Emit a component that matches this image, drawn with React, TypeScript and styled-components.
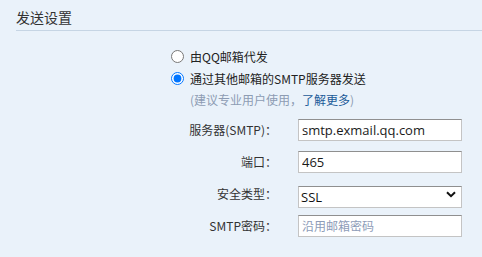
import React from "react";
import styled, { createGlobalStyle } from "styled-components";

const GlobalStyle = createGlobalStyle`
  html, body {
    margin: 0;
    padding: 0;
    background: #eaf2fa;
  }
  body {
    font-family: "Noto Sans CJK SC", "Noto Sans", sans-serif;
    color: #333;
  }
`;

const Page = styled.div`
  width: 482px;
  height: 257px;
  background: #eaf2fa;
  overflow: hidden;
`;

const Header = styled.div`
  box-sizing: border-box;
  margin-left: 16px;
  height: 31px;
  padding-top: 7px;
  border-bottom: 1px solid #c6d5e4;
  font-size: 14px;
  line-height: 20px;
  color: #333;
`;

const Options = styled.div`
  margin-top: 14px;
  padding-left: 171px;
  display: flex;
  flex-direction: column;
`;

const OptionRow = styled.label`
  display: flex;
  align-items: center;
  gap: 6px;
  height: 22px;
  font-size: 12px;
  color: #222;
  cursor: pointer;
`;

const Radio = styled.input`
  margin: 0;
  width: 13px;
  height: 13px;
  accent-color: #0075ff;
`;

const Hint = styled.div`
  height: 21px;
  line-height: 21px;
  padding-left: 19px;
  font-size: 12px;
  color: #8d9cb3;
`;

const Link = styled.a`
  color: #1b5a98;
  text-decoration: none;
`;

const Form = styled.div`
  margin-top: 9px;
  display: grid;
  grid-template-columns: 277px 164px;
  grid-auto-rows: 22px;
  column-gap: 21px;
  row-gap: 10px;
`;

const Label = styled.label`
  justify-self: end;
  font-size: 12px;
  line-height: 22px;
  color: #333;
  white-space: nowrap;
`;

const fieldBase = `
  box-sizing: border-box;
  width: 164px;
  height: 22px;
  margin: 0;
  padding: 0 3px;
  border: 1px solid #c4c4c4;
  border-top-color: #8f8f8f;
  background: #fff;
  font-family: "Open Sans", "Noto Sans CJK SC", sans-serif;
  font-size: 13px;
  color: #1a1a1a;
  outline: none;
  border-radius: 0;
`;

const TextInput = styled.input`
  ${fieldBase}
  &::placeholder {
    font-family: "Noto Sans CJK SC", sans-serif;
    font-size: 12px;
    color: #8e9cb8;
  }
`;

const SelectWrap = styled.div`
  position: relative;
  width: 164px;
  height: 22px;
`;

const Select = styled.select`
  ${fieldBase}
  appearance: none;
  -webkit-appearance: none;
  padding-left: 2px;
  color: #111;
`;

const Chevron = styled.svg`
  position: absolute;
  right: 6px;
  top: 8px;
  width: 10px;
  height: 7px;
  pointer-events: none;
`;

export default function App() {
  return (
    <>
      <GlobalStyle />
      <Page>
        <Header>发送设置</Header>
        <Options>
          <OptionRow>
            <Radio type="radio" name="send" />
            由QQ邮箱代发
          </OptionRow>
          <OptionRow>
            <Radio type="radio" name="send" defaultChecked />
            通过其他邮箱的SMTP服务器发送
          </OptionRow>
          <Hint>
            (建议专业用户使用，<Link href="#">了解更多</Link>)
          </Hint>
        </Options>
        <Form>
          <Label>服务器(SMTP)：</Label>
          <TextInput defaultValue="smtp.exmail.qq.com" />
          <Label>端口：</Label>
          <TextInput defaultValue="465" />
          <Label>安全类型：</Label>
          <SelectWrap>
            <Select defaultValue="SSL">
              <option value="SSL">SSL</option>
              <option value="TLS">TLS</option>
              <option value="NONE">无</option>
            </Select>
            <Chevron viewBox="0 0 10 7">
              <path d="M1 1.2 L5 5.2 L9 1.2" fill="none" stroke="#111" strokeWidth="2" />
            </Chevron>
          </SelectWrap>
          <Label>SMTP密码：</Label>
          <TextInput type="password" placeholder="沿用邮箱密码" />
        </Form>
      </Page>
    </>
  );
}
